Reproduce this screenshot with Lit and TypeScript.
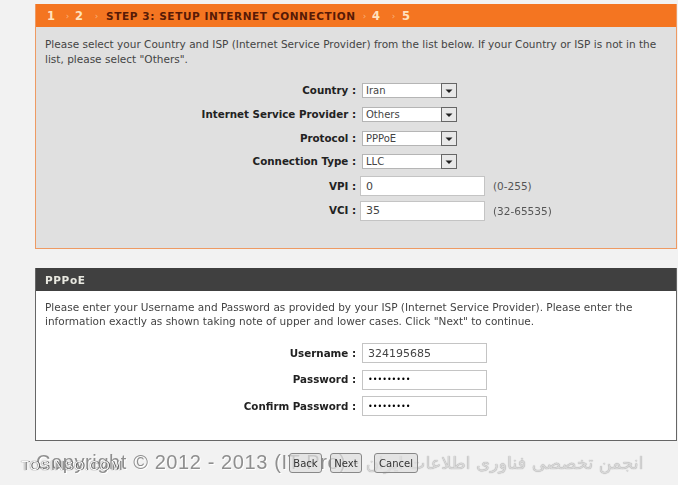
import { LitElement, html, css } from "lit";
import { customElement } from "lit/decorators.js";

@customElement("app-root")
export class AppRoot extends LitElement {
  static styles = css`
    :host { display: block; width: 678px; height: 485px; overflow: hidden; background: #f2f2f2; font-family: "DejaVu Sans", sans-serif; color: #333; }
    .page { display: flex; flex-direction: column; padding: 4px 1px 0 35px; height: 485px; box-sizing: border-box; filter: blur(0.35px); }
    .wizard { height: 245px; box-sizing: border-box; background: #e0e0e0; border: 1px solid #ee9a63; border-top: 0; flex: none; }
    .steps { height: 23px; background: #f47521; display: flex; align-items: center; padding-left: 11px; font-weight: 700; font-size: 11.5px; color: #ffe2bd; box-sizing: border-box; }
    .steps .n { width: 13px; }
    .steps .s { width: 15px; font-size: 9px; font-weight: 400; color: #f9b37f; text-align: center; }
    .steps .sg { width: 17px; }
    .steps .title { color: #571a06; width: 251px; padding-left: 1px; font-size: 10.5px; letter-spacing: 0.6px; white-space: nowrap; }
    .intro { margin: 0; padding: 10px 9px 0; font-size: 10.53px; line-height: 15px; color: #444; height: 34px; box-sizing: content-box; white-space: nowrap; }
    .rows { display: flex; flex-direction: column; margin-top: 8px; }
    .row { display: flex; align-items: center; height: 23.7px; font-size: 11px; }
    .row.tall { height: 24.6px; }
    .lbl { width: 320px; flex: none; text-align: right; font-weight: 700; color: #222; white-space: nowrap; font-size: 10.3px; padding-bottom: 1px; }
    .sel { margin-left: 6px; width: 95px; height: 15px; display: flex; background: #fff; border: 1px solid #b5b5b5; box-sizing: border-box; font-size: 10px; color: #444; align-items: center; padding-left: 3px; position: relative; }
    .sel svg { position: absolute; right: -1px; top: -1px; }
    .inp { margin-left: 4px; width: 125px; height: 20px; box-sizing: border-box; border: 1px solid #c4c4c4; background: #fff; padding: 0 0 0 5px; font: 11px "DejaVu Sans", sans-serif; color: #444; outline: none; }
    .hint { margin-left: 8px; font-size: 10.5px; color: #555; }
    .gap { height: 19px; flex: none; }
    .pppoe { height: 173px; box-sizing: border-box; background: #fff; border: 1px solid #666; border-top: 0; flex: none; }
    .phead { height: 23px; background: #404040; color: #e8e8e0; font-weight: 700; font-size: 10.5px; letter-spacing: 0.6px; display: flex; align-items: center; padding-left: 9px; box-sizing: border-box; }
    .pintro { margin: 0; padding: 10px 9px 0; font-size: 10.53px; line-height: 13.5px; color: #444; white-space: nowrap; height: 27px; }
    .prows { display: flex; flex-direction: column; margin-top: 12px; }
    .prow { display: flex; align-items: center; height: 26.5px; }
    .prow .inp { margin-left: 6px; height: 20px; }
    .prow .inp[type="password"] { font-size: 8px; color: #000; }
    .foot { position: relative; flex: none; height: 44px; margin-left: -35px; }
    .copy { padding: 10px 0 0 36px; font: 20px "Liberation Sans", Arial, sans-serif; color: #8f8f8f; text-shadow: 1px 1px 0 #fff; white-space: nowrap; letter-spacing: 0.6px; }
    .copy .ar { font-family: "DejaVu Sans", sans-serif; font-size: 17.6px; color: #d8d8d8; text-shadow: 0 0 1px #888; margin-left: 0; letter-spacing: 0; }
    .btn { position: absolute; top: 12px; height: 20px; box-sizing: border-box; border: 1px solid #888; border-radius: 3px; background: rgba(222, 222, 222, 0.7); font: 10px "DejaVu Sans", sans-serif; color: #333; display: flex; align-items: center; justify-content: center; padding: 0; }
    .back { left: 289px; width: 33px; }
    .next { left: 330px; width: 32px; }
    .cancel { left: 374px; width: 44px; }
    .mark { position: absolute; left: 21px; top: 17px; font: 13px "Liberation Sans", Arial, sans-serif; color: #fafafa; letter-spacing: 0.8px; text-shadow: 0 0 1px #222, 1px 0 0 #666; }
  `;

  private arrow() {
    return html`<svg width="16" height="15" viewBox="0 0 16 15"><rect x=".5" y=".5" width="15" height="14" fill="#e8e8e8" stroke="#666"/><path d="M4.5 6.5h7L8 10z" fill="#222"/></svg>`;
  }

  private sel(label: string, value: string) {
    return html`<div class="row"><span class="lbl">${label} :</span><div class="sel">${value}${this.arrow()}</div></div>`;
  }

  private field(label: string, value: string, hint: string) {
    return html`<div class="row tall"><span class="lbl">${label} :</span><input class="inp" .value=${value} /><span class="hint">${hint}</span></div>`;
  }

  private cred(label: string, value: string, type: string) {
    return html`<div class="prow"><span class="lbl">${label} :</span><input class="inp" type=${type} .value=${value} /></div>`;
  }

  render() {
    return html`<div class="page">
      <section class="wizard">
        <div class="steps">
          <span class="n">1</span><span class="s">›</span><span class="n">2</span><span class="s sg">›</span>
          <span class="title">STEP 3: SETUP INTERNET CONNECTION</span>
          <span class="s">›</span><span class="n">4</span><span class="s sg">›</span><span class="n">5</span>
        </div>
        <p class="intro">Please select your Country and ISP (Internet Service Provider) from the list below. If your Country or ISP is not in the<br />list, please select "Others".</p>
        <div class="rows">
          ${this.sel("Country", "Iran")}
          ${this.sel("Internet Service Provider", "Others")}
          ${this.sel("Protocol", "PPPoE")}
          ${this.sel("Connection Type", "LLC")}
          ${this.field("VPI", "0", "(0-255)")}
          ${this.field("VCI", "35", "(32-65535)")}
        </div>
      </section>
      <div class="gap"></div>
      <section class="pppoe">
        <div class="phead">PPPoE</div>
        <p class="pintro">Please enter your Username and Password as provided by your ISP (Internet Service Provider). Please enter the<br />information exactly as shown taking note of upper and lower cases. Click "Next" to continue.</p>
        <div class="prows">
          ${this.cred("Username", "324195685", "text")}
          ${this.cred("Password", "123456789", "password")}
          ${this.cred("Confirm Password", "123456789", "password")}
        </div>
      </section>
      <footer class="foot">
        <div class="copy">Copyright © 2012 - 2013 (IT Pro) - <span class="ar" dir="rtl">انجمن تخصصی فناوری اطلاعات ایران</span></div>
        <button class="btn back">Back</button>
        <button class="btn next">Next</button>
        <button class="btn cancel">Cancel</button>
        <span class="mark">TOSINSO.COM</span>
      </footer>
    </div>`;
  }
}
